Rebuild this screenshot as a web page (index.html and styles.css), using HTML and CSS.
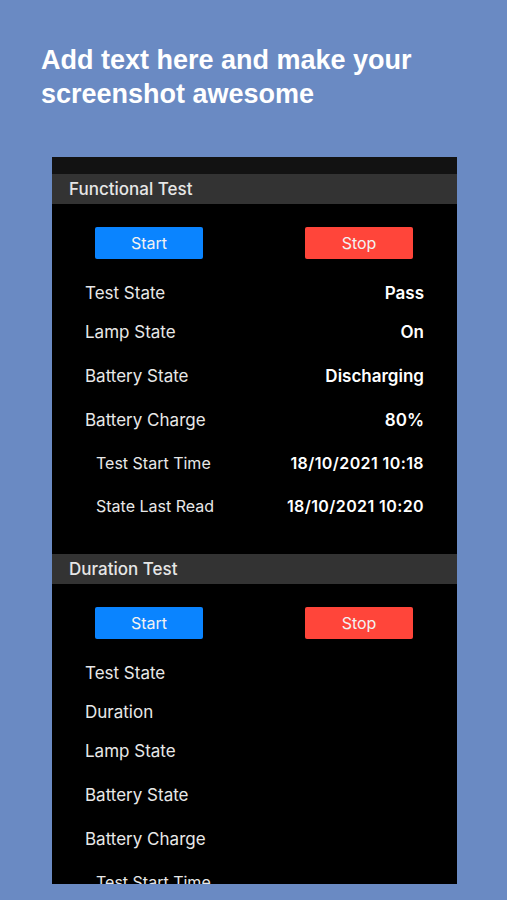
FILE: index.html
```html
<!DOCTYPE html>
<html lang="en">
<head>
  <meta charset="UTF-8" />
  <meta name="viewport" content="width=device-width, initial-scale=1.0"/>
  <title>Light Test</title>
  <link rel="stylesheet" href="styles.css">
</head>
<body>
  <h1 class="promo">Add text here and make your<br>screenshot awesome</h1>

  <div class="screen">
    <div class="nav-strip"><span class="back">&#8249; Lights</span></div>

    <section class="test">
      <div class="section-head">Functional Test</div>
      <div class="actions">
        <button class="btn btn-start">Start</button>
        <button class="btn btn-stop">Stop</button>
      </div>
      <div class="row"><span>Test State</span><b>Pass</b></div>
      <div class="row"><span>Lamp State</span><b>On</b></div>
      <div class="row tall"><span>Battery State</span><b>Discharging</b></div>
      <div class="row tall"><span>Battery Charge</span><b>80%</b></div>
      <div class="row sub"><span>Test Start Time</span><b>18/10/2021 10:18</b></div>
      <div class="row sub"><span>State Last Read</span><b>18/10/2021 10:20</b></div>
    </section>

    <section class="test">
      <div class="section-head">Duration Test</div>
      <div class="actions">
        <button class="btn btn-start">Start</button>
        <button class="btn btn-stop">Stop</button>
      </div>
      <div class="row"><span>Test State</span></div>
      <div class="row"><span>Duration</span></div>
      <div class="row"><span>Lamp State</span></div>
      <div class="row tall"><span>Battery State</span></div>
      <div class="row tall"><span>Battery Charge</span></div>
      <div class="row sub"><span>Test Start Time</span></div>
      <div class="row sub"><span>State Last Read</span></div>
    </section>
  </div>
</body>
</html>
```

FILE: styles.css
```css
body {
  margin: 0;
  height: 900px;
  overflow: hidden;
  background-color: #6a8ac3;
}

.promo {
  margin: 0;
  padding: 43px 0 0 41px;
  font-family: "Liberation Sans", Arial, sans-serif;
  font-size: 27px;
  line-height: 34px;
  font-weight: bold;
  color: #ffffff;
}

.screen {
  margin: 46px 0 0 52px;
  width: 405px;
  height: 727px;
  overflow: hidden;
  background-color: #000000;
  font-family: Inter, "Noto Sans", sans-serif;
  color: #e8e8e8;
}

.nav-strip {
  height: 17px;
  overflow: hidden;
  background-color: #121212;
}

/* back button scrolled up, only its lowest pixels still show */
.nav-strip .back {
  display: block;
  margin: -24px 0 0 10px;
  font-size: 24px;
  line-height: 22px;
  color: #0a84ff;
}

.test {
  padding-bottom: 29px;
}

.section-head {
  height: 30px;
  display: flex;
  align-items: center;
  padding-left: 17px;
  background-color: #333333;
  font-size: 17px;
  font-weight: 500;
  color: #e6e6e6;
}

.actions {
  display: flex;
  justify-content: space-between;
  padding: 23px 44px 0 43px;
  margin-bottom: 14px;
}

.btn {
  width: 108px;
  height: 32px;
  border: none;
  border-radius: 2px;
  font-family: Inter, "Noto Sans", sans-serif;
  font-size: 16px;
  color: #f2f2f2;
}

.btn-start {
  background-color: #0a84ff;
}

.btn-stop {
  background-color: #ff453a;
}

.row {
  height: 39px;
  display: flex;
  align-items: center;
  justify-content: space-between;
  padding: 0 33px;
  font-size: 17px;
}

.row b {
  font-weight: 600;
  color: #ffffff;
}

.row.tall {
  margin-top: 5px;
}

.row.sub {
  margin-top: 4px;
  padding-left: 44px;
  font-size: 16px;
}

.row.sub b {
  letter-spacing: 0.4px;
}
```
